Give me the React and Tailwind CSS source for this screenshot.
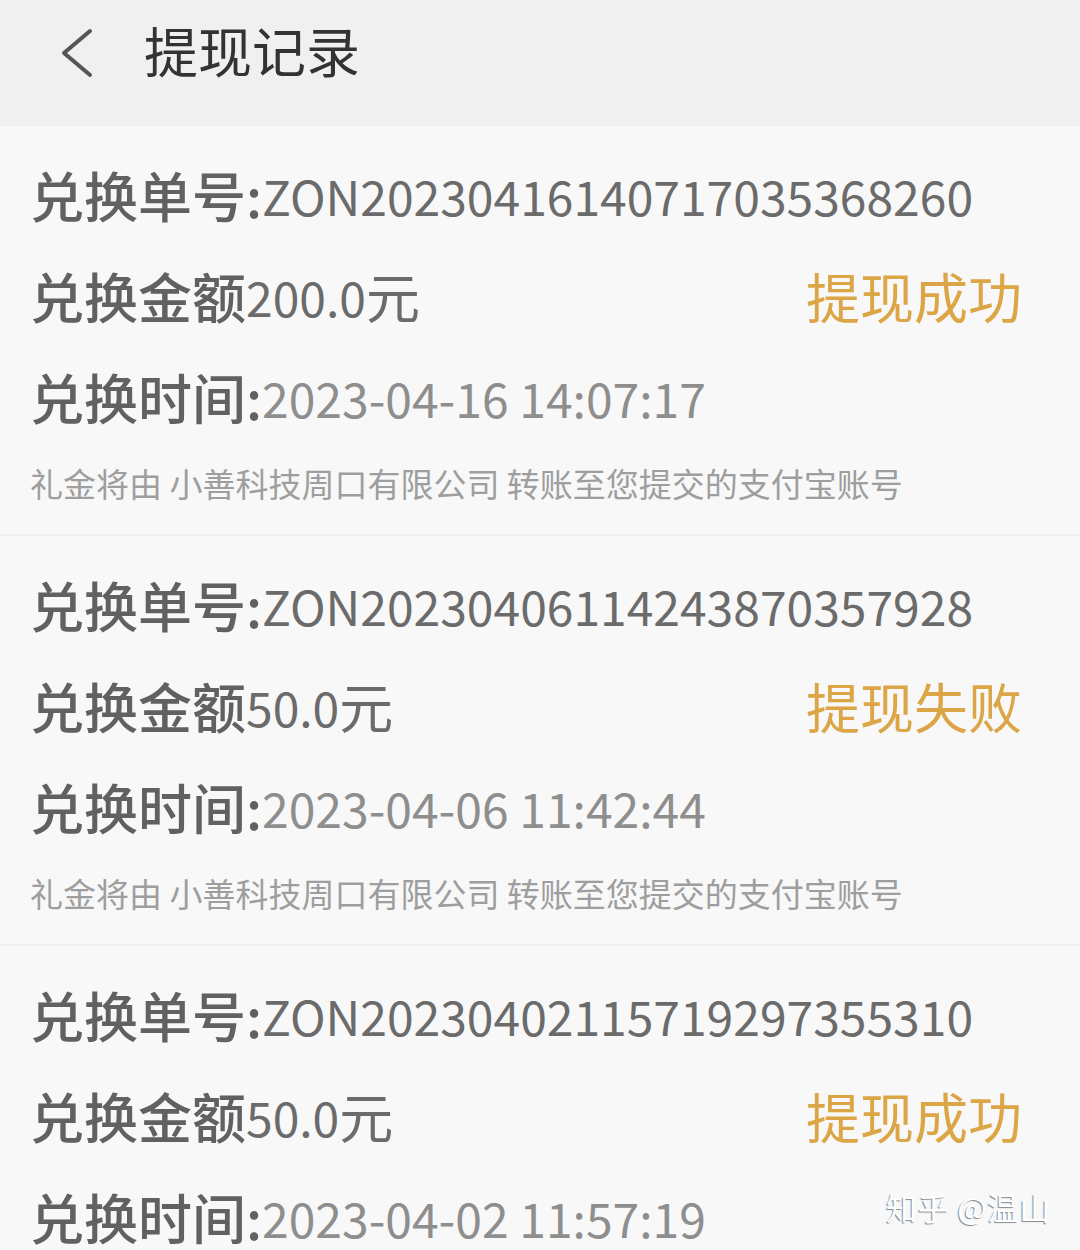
import React from 'react';

const FONT = "font-['Noto_Sans_CJK_SC',_'Noto_Sans',_sans-serif]";

const records = [
  { id: 'ZON20230416140717035368260', amount: '200.0', time: '2023-04-16 14:07:17', status: '提现成功' },
  { id: 'ZON20230406114243870357928', amount: '50.0', time: '2023-04-06 11:42:44', status: '提现失败' },
  { id: 'ZON20230402115719297355310', amount: '50.0', time: '2023-04-02 11:57:19', status: '提现成功' },
];

const Record = ({ r }) => (
  <div className="bg-[#f8f8f8] border-b-2 border-[#eeeeee] pl-[30px] pr-[58px] pt-[18px] pb-[13px]">
    <div className="h-[101px] flex items-center text-[54px] text-[#616161] whitespace-nowrap">
      <span className="font-medium">兑换单号:</span>
      <span className="text-[48px] text-[#6b6b6b]">{r.id}</span>
    </div>
    <div className="h-[101px] flex items-center justify-between text-[54px] whitespace-nowrap">
      <p className="text-[#616161] flex items-center">
        <span className="font-medium">兑换金额</span>
        <span className="text-[48px] text-[#6b6b6b]">{r.amount}</span>
        <span className="text-[#6b6b6b]">元</span>
      </p>
      <span className="text-[#dca546]">{r.status}</span>
    </div>
    <div className="h-[101px] flex items-center text-[54px] whitespace-nowrap">
      <span className="font-medium text-[#616161]">兑换时间:</span>
      <span className="text-[48px] text-[#8e8e8e]">{r.time}</span>
    </div>
    <div className="h-[74px] flex items-center text-[33px] text-[#9e9e9e] whitespace-nowrap">
      礼金将由 小善科技周口有限公司 转账至您提交的支付宝账号
    </div>
  </div>
);

export default function App() {
  return (
    <div className={`relative w-[1080px] h-[1250px] overflow-hidden bg-[#f8f8f8] ${FONT}`}>
      {/* Header */}
      <div className="h-[126px] bg-[#f0f0f0] flex items-center pl-[58px] pb-[2px]">
        <svg width="36" height="50" viewBox="0 0 36 50" className="mt-[-18px]">
          <path d="M32 3 L6 25 L32 47" fill="none" stroke="#555555" strokeWidth="4" strokeLinecap="round" strokeLinejoin="round" />
        </svg>
        <h1 className="ml-[50px] text-[54px] text-[#333333] leading-none mt-[-24px]">提现记录</h1>
      </div>

      {records.map(r => <Record key={r.id} r={r} />)}

      {/* Watermark */}
      <div className="absolute left-[886px] top-[1184px] text-[31px] text-white tracking-wide [text-shadow:-1px_1px_1px_rgba(0,0,0,0.45)]">
        知乎 @温山
      </div>
    </div>
  );
}
